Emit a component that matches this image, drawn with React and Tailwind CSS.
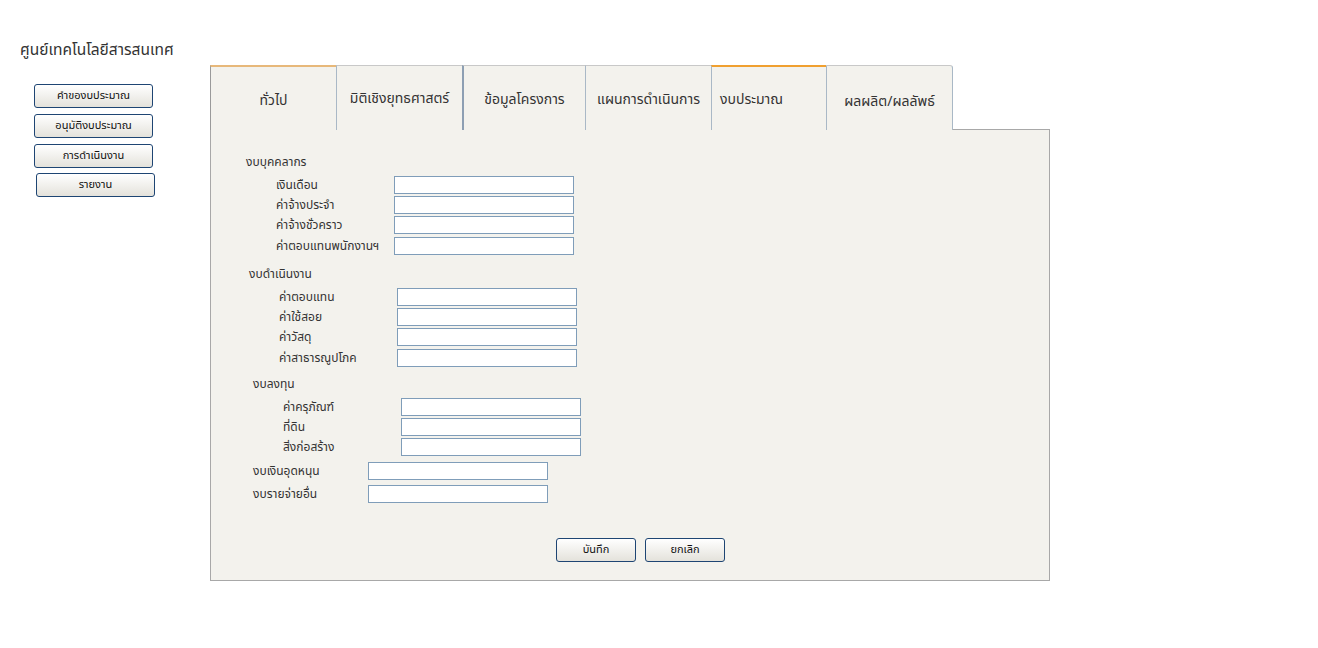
const font = { fontFamily: 'Tahoma, "Noto Sans Thai", "Noto Sans", sans-serif' };

const sideButtons = [
  { label: 'คำของบประมาณ', ml: 'ml-[14px]' },
  { label: 'อนุมัติงบประมาณ', ml: 'ml-[14px]' },
  { label: 'การดำเนินงาน', ml: 'ml-[14px]' },
  { label: 'รายงาน', ml: 'ml-[16px]' },
];

const tabs = [
  { label: 'ทั่วไป', w: 'w-[126px]', cls: 'border-l border-l-[#9a9a9a] border-t-2 border-t-[#e7b87a] justify-center pt-[25px]' },
  { label: 'มิติเชิงยุทธศาสตร์', w: 'w-[126px]', cls: 'border-l border-l-[#a9b8c6] border-t border-t-[#c8c8c8] justify-center pt-[24px]' },
  { label: 'ข้อมูลโครงการ', w: 'w-[123px]', cls: 'border-l-2 border-l-[#8d9fb3] border-t border-t-[#c8c8c8] justify-center pt-[25px]' },
  { label: 'แผนการดำเนินการ', w: 'w-[126px]', cls: 'border-l border-l-[#a9b8c6] border-t border-t-[#c8c8c8] justify-center pt-[25px]' },
  { label: 'งบประมาณ', w: 'w-[115px]', cls: 'border-l border-l-[#a9b8c6] border-t-2 border-t-[#f0a030] pl-[8px] pt-[24px]' },
  { label: 'ผลผลิต/ผลลัพธ์', w: 'w-[127px]', cls: 'border-x border-x-[#a9b8c6] border-t border-t-[#c8c8c8] rounded-tr-[3px] justify-center pt-[27px]' },
];

function Btn({ children, w = 'w-[119px]', className = '' }) {
  return (
    <button
      type="button"
      className={`h-[24px] ${w} rounded-[3px] border border-[#1e4573] bg-gradient-to-b from-white to-[#e4e2db] text-[11px] text-[#111] ${className}`}
    >
      {children}
    </button>
  );
}

function Field({ label, labelW, mt = 'mt-[2px]' }) {
  return (
    <div className={`flex items-center ${mt}`}>
      <span className={`${labelW} shrink-0 text-[12px] leading-[18px] text-[#333]`}>{label}</span>
      <input
        type="text"
        className="h-[18px] w-[180px] border border-[#7f9db9] bg-white outline-none"
      />
    </div>
  );
}

export default function App() {
  return (
    <div className="flex min-h-[648px] bg-white" style={font}>
      <div className="w-[210px] shrink-0 pl-[20px] pt-[42px]">
        <div className="text-[15.5px] leading-[18px] text-[#333]">ศูนย์เทคโนโลยีสารสนเทศ</div>
        <div className="mt-[24px] flex flex-col">
          {sideButtons.map((b, i) => (
            <Btn key={b.label} className={`${b.ml} ${i === 0 ? '' : i === 3 ? 'mt-[5px]' : 'mt-[6px]'}`}>
              {b.label}
            </Btn>
          ))}
        </div>
      </div>

      <div className="mt-[65px] w-[840px] shrink-0">
        <div className="flex h-[65px]">
          {tabs.map((t) => (
            <div
              key={t.label}
              className={`${t.w} ${t.cls} flex shrink-0 bg-[#f3f2ed] text-[14px] leading-[18px] text-[#333]`}
            >
              {t.label}
            </div>
          ))}
          <div className="flex-1 border-b border-[#a8a8a8]" />
        </div>

        <div className="h-[451px] border-x border-b border-[#a8a8a8] bg-[#f3f2ed] pt-[24px] text-[#333]">
          <div className="pl-[35px]">
            <div className="text-[12px] leading-[16px]">งบบุคคลากร</div>
            <div className="mt-[6px] pl-[30px]">
              <Field label="เงินเดือน" labelW="w-[118px]" mt="mt-0" />
              <Field label="ค่าจ้างประจำ" labelW="w-[118px]" />
              <Field label="ค่าจ้างชั่วคราว" labelW="w-[118px]" />
              <Field label="ค่าตอบแทนพนักงานฯ" labelW="w-[118px]" mt="mt-[3px]" />
            </div>
          </div>

          <div className="mt-[11px] pl-[38px]">
            <div className="text-[12px] leading-[16px]">งบดำเนินงาน</div>
            <div className="mt-[6px] pl-[30px]">
              <Field label="ค่าตอบแทน" labelW="w-[118px]" mt="mt-0" />
              <Field label="ค่าใช้สอย" labelW="w-[118px]" />
              <Field label="ค่าวัสดุ" labelW="w-[118px]" />
              <Field label="ค่าสาธารณูปโภค" labelW="w-[118px]" mt="mt-[3px]" />
            </div>
          </div>

          <div className="mt-[9px] pl-[42px]">
            <div className="text-[12px] leading-[16px]">งบลงทุน</div>
            <div className="mt-[6px] pl-[30px]">
              <Field label="ค่าครุภัณฑ์" labelW="w-[118px]" mt="mt-0" />
              <Field label="ที่ดิน" labelW="w-[118px]" />
              <Field label="สิ่งก่อสร้าง" labelW="w-[118px]" />
            </div>
          </div>

          <div className="mt-[6px] pl-[42px]">
            <Field label="งบเงินอุดหนุน" labelW="w-[115px]" mt="mt-0" />
            <Field label="งบรายจ่ายอื่น" labelW="w-[115px]" mt="mt-[5px]" />
          </div>

          <div className="mt-[35px] flex gap-[9px] pl-[345px]">
            <Btn w="w-[80px]">บันทึก</Btn>
            <Btn w="w-[80px]">ยกเลิก</Btn>
          </div>
        </div>
      </div>
    </div>
  );
}
